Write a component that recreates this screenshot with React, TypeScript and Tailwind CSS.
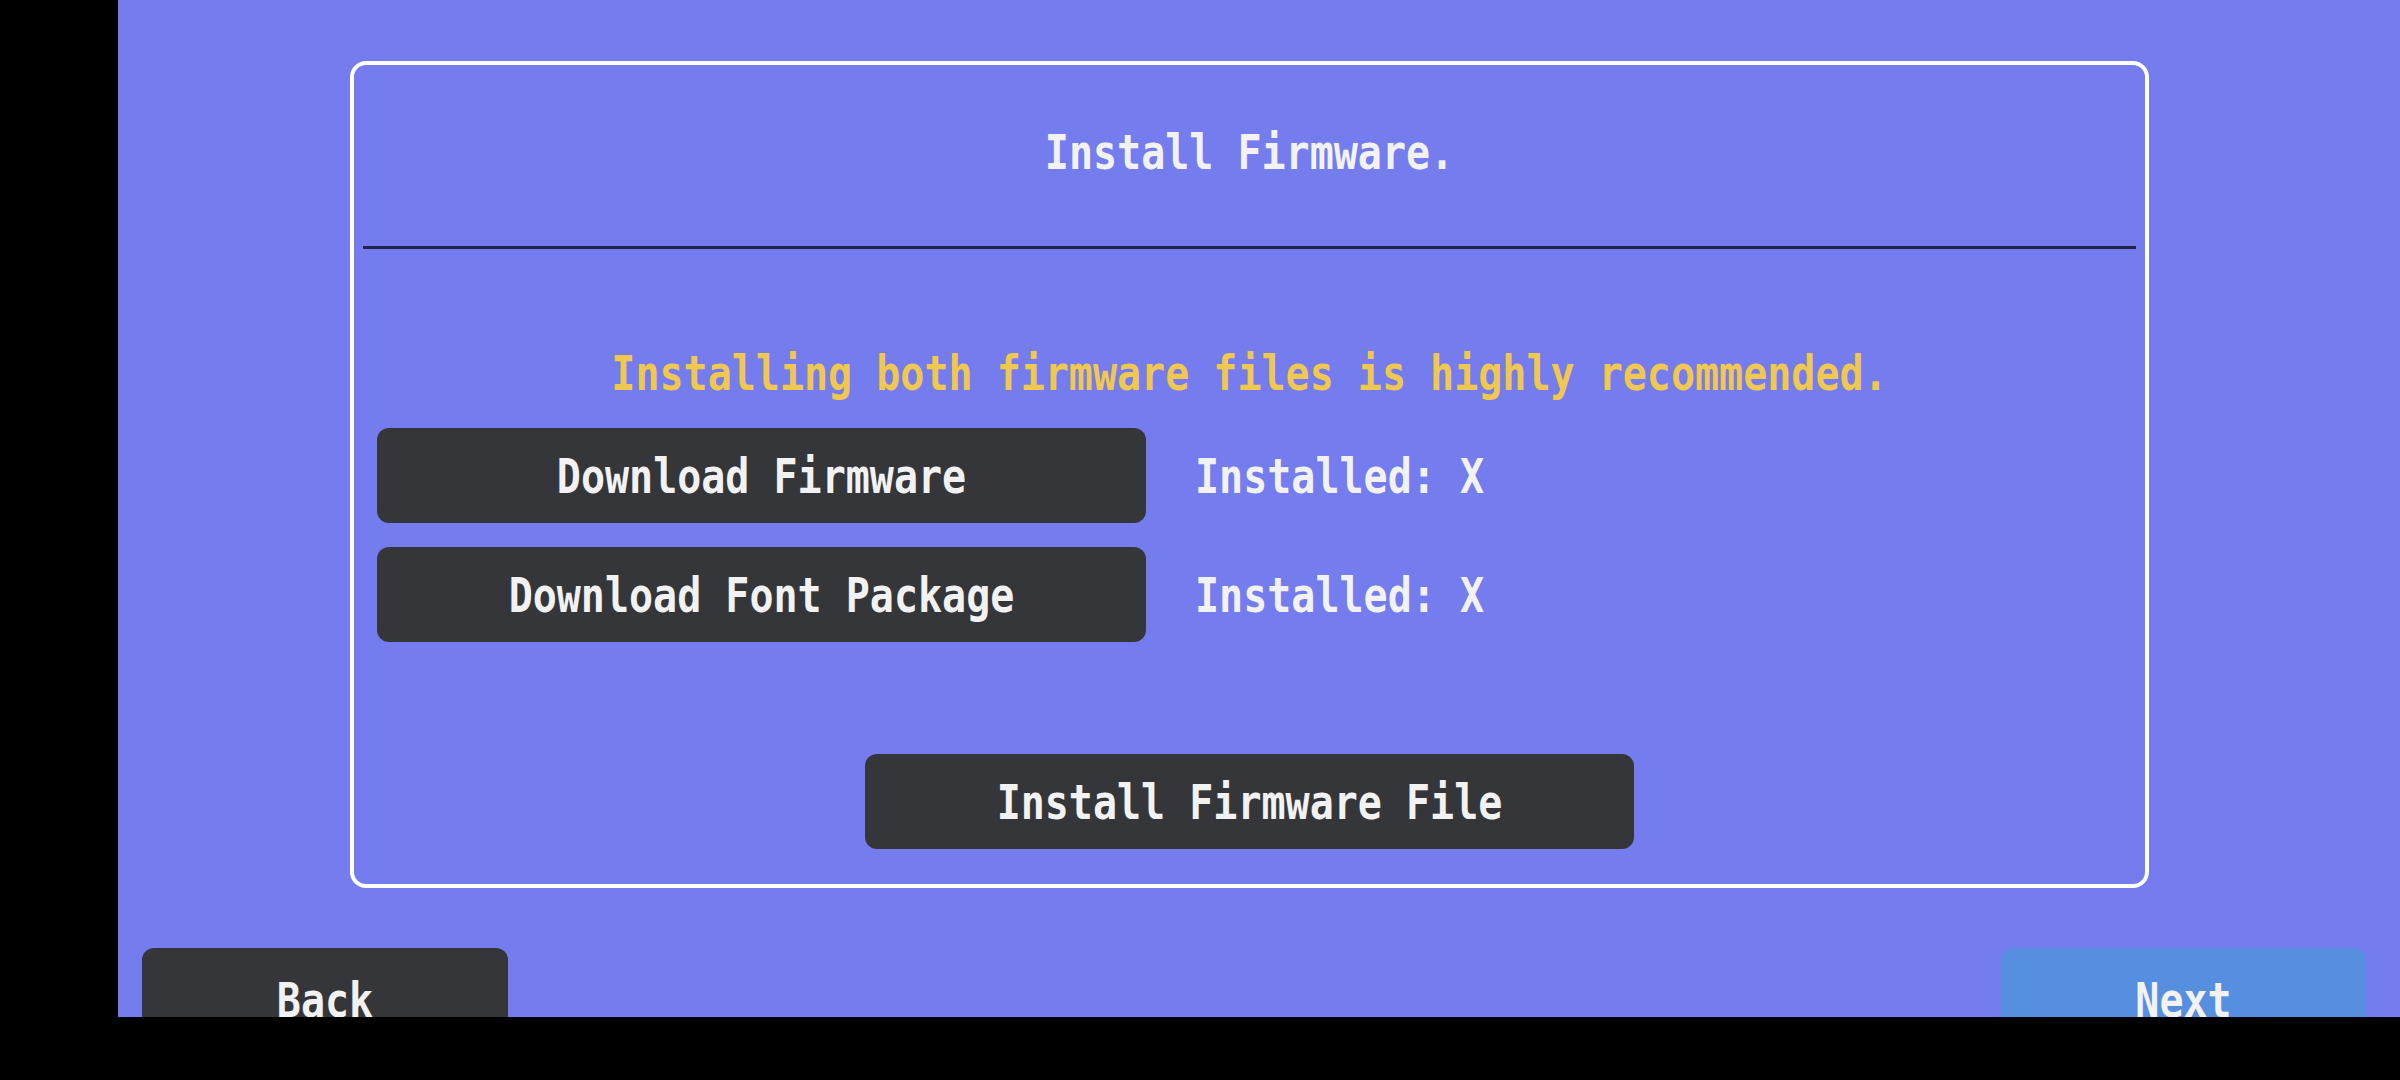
import React from 'react'

const font = { fontFamily: '"DejaVu Sans Mono", "Liberation Mono", monospace' }

const Txt = ({ children }: { children: React.ReactNode }) => (
  <span className="inline-block scale-y-[1.2] whitespace-pre">{children}</span>
)

const DarkButton = ({ label }: { label: string }) => (
  <button className="w-[769px] h-[95px] rounded-[12px] bg-[#35363a] text-[#f2f2f2] text-[40px] font-bold flex items-center justify-center">
    <Txt>{label}</Txt>
  </button>
)

const FirmwareRow = ({ label }: { label: string }) => (
  <div className="flex items-center gap-[49px]">
    <DarkButton label={label} />
    <div className="text-[40px] font-bold text-[#f2f2f2]">
      <Txt>Installed: X</Txt>
    </div>
  </div>
)

export default function App() {
  return (
    <div className="w-[2400px] h-[1080px] bg-black flex overflow-hidden" style={font}>
      <div className="w-[118px] shrink-0" />
      <div className="flex-1 h-[1017px] bg-[#747cee] overflow-hidden flex flex-col">
        {/* setup card */}
        <div className="mt-[61px] ml-[232px] w-[1799px] border-[4px] border-white rounded-[16px] flex flex-col">
          <div className="h-[181px] pb-[8px] flex items-center justify-center text-[40px] font-bold text-[#f2f2f2]">
            <Txt>Install Firmware.</Txt>
          </div>
          <div className="mx-[9px] h-[3px] bg-[#23264a]" />

          <div className="mt-[94px] h-[60px] flex items-center justify-center text-[40px] font-bold text-[#f0c850]">
            <Txt>Installing both firmware files is highly recommended.</Txt>
          </div>

          <div className="mt-[25px] px-[23px] flex flex-col gap-[24px]">
            <FirmwareRow label="Download Firmware" />
            <FirmwareRow label="Download Font Package" />
          </div>

          <div className="mt-[112px] pb-[35px] flex justify-center">
            <DarkButton label="Install Firmware File" />
          </div>
        </div>

        {/* nav buttons, cut off by the bottom bar */}
        <div className="mt-[60px] pl-[24px] pr-[34px] flex justify-between">
          <button className="w-[366px] h-[95px] pt-[8px] rounded-[12px] bg-[#35363a] text-[#f2f2f2] text-[40px] font-bold flex items-center justify-center">
            <Txt>Back</Txt>
          </button>
          <button className="w-[365px] h-[95px] pt-[8px] rounded-[12px] bg-[#568ee0] text-[#f2f2f2] text-[40px] font-bold flex items-center justify-center">
            <Txt>Next</Txt>
          </button>
        </div>
      </div>
    </div>
  )
}
